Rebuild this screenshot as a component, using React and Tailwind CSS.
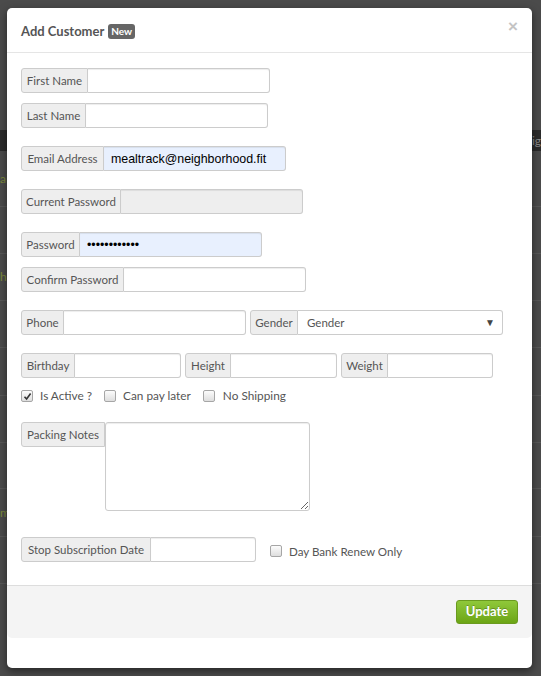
import React from "react";

const F = { fontFamily: "Lato, 'Open Sans', sans-serif" };
const A = { fontFamily: "'Liberation Sans', Arial, sans-serif" };

function Label({ children, w, className = "" }) {
  return (
    <span
      className={`flex h-[25px] shrink-0 items-center justify-center rounded-l-[3px] border border-[#cccccc] bg-[#eeeeee] text-[11.5px] text-[#555555] ${className}`}
      style={{ ...F, width: w }}
    >
      {children}
    </span>
  );
}

function Group({ label, lw, iw = 182, value, type = "text", bg = "bg-white", className = "" }) {
  return (
    <div className={`flex h-[25px] ${className}`}>
      <Label w={lw}>{label}</Label>
      <input
        type={type}
        defaultValue={value}
        readOnly
        className={`h-full rounded-r-[3px] border border-l-0 border-[#cccccc] ${bg} ${type === "password" ? "pl-[7px]" : "pl-[7px]"} text-[12.4px] text-black shadow-[inset_0_1px_1px_rgba(0,0,0,0.075)] outline-none`}
        style={{ width: iw, ...A }}
      />
    </div>
  );
}

function Check({ checked }) {
  return (
    <span className="flex h-[12px] w-[12px] shrink-0 items-center justify-center rounded-[2px] border border-[#a6a6a6] bg-gradient-to-b from-[#fcfcfc] to-[#dedede]">
      {checked && (
        <svg width="9" height="9" viewBox="0 0 9 9">
          <path d="M1.5 4.8 L3.6 7 L7.6 1.6" fill="none" stroke="#333" strokeWidth="1.6" />
        </svg>
      )}
    </span>
  );
}

function BgRow({ h, left = "" }) {
  return (
    <div className="flex items-center border-b border-[#585858] text-[12px] text-[#7c8a3c]" style={{ height: h, ...F }}>
      <span>{left}</span>
    </div>
  );
}

export default function App() {
  return (
    <div className="relative h-[676px] w-[541px] overflow-hidden bg-[#4b4b4b]">
      {/* page behind overlay */}
      <div className="pt-[130px]">
        <div className="flex h-[21px] items-center justify-end bg-[#2b2b2b] text-[12px] text-[#8a8a8a]" style={F}>
          <span>ig</span>
        </div>
        <BgRow h={56} left="ai" />
        <BgRow h={47} />
        <BgRow h={47} left="he" />
        <BgRow h={47} />
        <BgRow h={48} />
        <BgRow h={47} />
        <BgRow h={46} />
        <BgRow h={48} left="m" />
        <BgRow h={47} />
      </div>

      {/* modal */}
      <div className="absolute left-[7px] top-[8px] flex h-[660px] w-[525px] flex-col rounded-[5px] bg-white shadow-[0_3px_9px_rgba(0,0,0,0.5)]" style={F}>
        <div className="flex h-[45px] shrink-0 items-center justify-between border-b border-[#e5e5e5] px-[14px] pt-[3px]">
          <div className="flex items-center gap-[4px]">
            <span className="text-[13px] font-bold text-[#555555]">Add Customer</span>
            <span className="rounded-[3px] bg-[#666666] px-[3px] text-[10px] font-bold leading-[15px] text-white">New</span>
          </div>
          <span className="-mt-[10px] text-[17px] font-bold leading-none text-[#c4c4c4]" style={A}>×</span>
        </div>

        <div className="flex grow flex-col pl-[14px]">
          <Group className="mt-[15px]" label="First Name" lw={67} />
          <Group className="mt-[10px]" label="Last Name" lw={65} />
          <Group className="mt-[18px]" label="Email Address" lw={83} value="mealtrack@neighborhood.fit" bg="bg-[#e8f0fe]" />
          <Group className="mt-[18px]" label="Current Password" lw={100} bg="bg-[#eeeeee]" />
          <Group className="mt-[18px]" label="Password" lw={59} type="password" value="mealtrack123" bg="bg-[#e8f0fe]" />
          <Group className="mt-[10px]" label="Confirm Password" lw={103} />

          <div className="mt-[18px] flex gap-[4px]">
            <Group label="Phone" lw={43} />
            <div className="flex h-[25px]">
              <Label w={48}>Gender</Label>
              <div className="flex h-full w-[205px] items-center justify-between rounded-r-[3px] border border-l-0 border-[#cccccc] bg-white pl-[9px] pr-[7px] text-[11.5px] text-[#555555]">
                <span>Gender</span>
                <span className="text-[10px] text-[#444]" style={A}>▼</span>
              </div>
            </div>
          </div>

          <div className="mt-[18px] flex gap-[4px]">
            <Group label="Birthday" lw={54} iw={106} />
            <Group label="Height" lw={46} iw={106} />
            <Group label="Weight" lw={47} iw={105} />
          </div>

          <div className="mt-[11px] flex h-[14px] items-center text-[11.8px] text-[#555555]">
            <Check checked />
            <span className="ml-[7px]">Is Active ?</span>
            <span className="ml-[12px]"><Check /></span>
            <span className="ml-[7px]">Can pay later</span>
            <span className="ml-[12px]"><Check /></span>
            <span className="ml-[8px]">No Shipping</span>
          </div>

          <div className="mt-[19px] flex items-start">
            <Label w={84}>Packing Notes</Label>
            <textarea
              readOnly
              className="h-[89px] w-[205px] resize rounded-[3px] border border-[#cccccc] bg-white shadow-[inset_0_1px_1px_rgba(0,0,0,0.075)] outline-none"
            />
          </div>

          <div className="mt-[26px] flex items-center">
            <Group label="Stop Subscription Date" lw={130} iw={105} />
            <span className="ml-[14px] mt-[4px] flex items-center text-[11.6px] text-[#555555]">
              <Check />
              <span className="ml-[7px]">Day Bank Renew Only</span>
            </span>
          </div>
        </div>

        <div className="mb-[30px] flex h-[53px] shrink-0 items-start justify-end rounded-b-[5px] border-t border-[#dddddd] bg-[#f4f4f4] pr-[14px] pt-[14px]">
          <button
            className="h-[24px] w-[62px] rounded-[3px] border border-[#6a9a1f] bg-gradient-to-b from-[#8fc83a] to-[#6ca514] text-[13px] font-bold text-white [text-shadow:0_-1px_0_rgba(0,0,0,0.25)]"
            style={F}
          >
            Update
          </button>
        </div>
      </div>
    </div>
  );
}
